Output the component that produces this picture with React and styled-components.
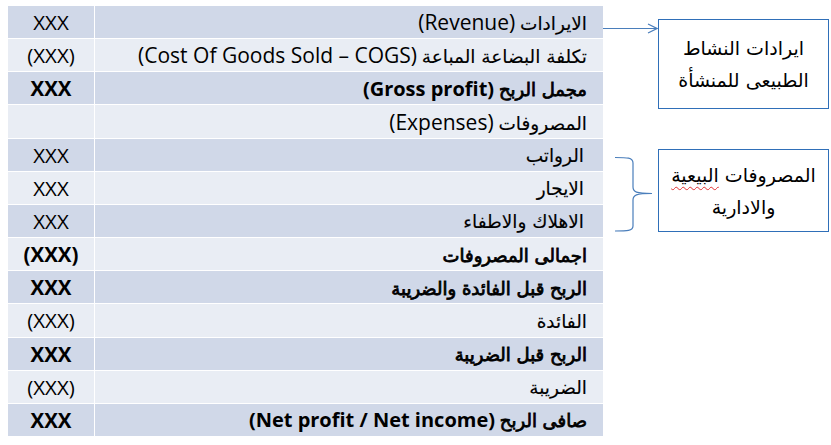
import React from "react";
import styled, { createGlobalStyle } from "styled-components";

const GlobalStyle = createGlobalStyle`
	html, body {
		margin: 0;
		padding: 0;
		background: #ffffff;
	}
`;

const rows = [
	{ value: "XXX", ar: "الايرادات", en: "(Revenue)" },
	{ value: "(XXX)", ar: "تكلفة البضاعة المباعة", en: "(Cost Of Goods Sold – COGS)" },
	{ value: "XXX", ar: "مجمل الربح", en: "(Gross profit)", bold: true },
	{ value: "", ar: "المصروفات", en: "(Expenses)" },
	{ value: "XXX", ar: "الرواتب", indent: true },
	{ value: "XXX", ar: "الايجار", indent: true },
	{ value: "XXX", ar: "الاهلاك والاطفاء", indent: true },
	{ value: "(XXX)", ar: "اجمالى المصروفات", bold: true },
	{ value: "XXX", ar: "الربح قبل الفائدة والضريبة", bold: true },
	{ value: "(XXX)", ar: "الفائدة" },
	{ value: "XXX", ar: "الربح قبل الضريبة", bold: true },
	{ value: "(XXX)", ar: "الضريبة" },
	{ value: "XXX", ar: "صافى الربح", en: "(Net profit / Net income)", bold: true },
];

export default function App() {
	return (
		<Page>
			<GlobalStyle />
			<Table>
				{rows.map((row, i) => (
					<React.Fragment key={i}>
						<ValueCell $dark={i % 2 === 0} $bold={row.bold}>
							{row.value}
						</ValueCell>
						<LabelCell $dark={i % 2 === 0} $indent={row.indent} dir="rtl">
							<span>
								<Arabic $bold={row.bold}>{row.ar}</Arabic>
								{row.en && (
									<>
										{" "}
										<Latin $bold={row.bold}>{row.en}</Latin>
									</>
								)}
							</span>
						</LabelCell>
					</React.Fragment>
				))}
			</Table>
			<Side>
				<Note $top={13}>
					<Connector width="55" height="90" viewBox="0 0 55 90">
						<path d="M0 9.5 H54" stroke="#4a7ebb" strokeWidth="1.2" fill="none" />
						<path d="M45 5 L54 9.5 L45 14" stroke="#4a7ebb" strokeWidth="1.2" fill="none" />
					</Connector>
					<NoteBox $height={90} dir="rtl">
						<span>ايرادات النشاط</span>
						<span>الطبيعى للمنشأة</span>
					</NoteBox>
				</Note>
				<Note $top={40}>
					<Connector width="55" height="83" viewBox="0 0 55 83">
						<path
							d="M12 8.5 C24 8.5 30 8.5 30 14 V38 C30 43 33 44.5 49 44.5 C33 44.5 30 46 30 51 V77 C30 82 24 82 12 82"
							stroke="#4a7ebb"
							strokeWidth="1.2"
							fill="none"
						/>
					</Connector>
					<NoteBox $height={83} dir="rtl">
						<span>
							المصروفات <Squiggle>البيعية</Squiggle>
						</span>
						<span>والادارية</span>
					</NoteBox>
				</Note>
			</Side>
		</Page>
	);
}

const Page = styled.div`
	display: flex;
	align-items: flex-start;
	padding: 6px 0 0 8px;
	width: 831px;
	height: 445px;
	box-sizing: border-box;
`;

const Table = styled.div`
	display: grid;
	grid-template-columns: 86px 508px;
	grid-template-rows: repeat(13, 1fr);
	gap: 1px;
	width: 595px;
	height: 430px;
	background: #ffffff;
	font-family: "Open Sans", "DejaVu Sans", sans-serif;
	font-size: 18.5px;
	color: #000000;
`;

const Cell = styled.div`
	display: flex;
	align-items: center;
	background: ${(p) => (p.$dark ? "#d0d8e8" : "#e9edf4")};
	white-space: nowrap;
`;

const ValueCell = styled(Cell)`
	justify-content: center;
	font-size: 20.5px;
	font-weight: ${(p) => (p.$bold ? 700 : 400)};
`;

const LabelCell = styled(Cell)`
	justify-content: flex-start;
	padding-right: ${(p) => (p.$indent ? "19px" : "16px")};
`;

const Arabic = styled.span`
	font-family: "DejaVu Sans", sans-serif;
	font-size: ${(p) => (p.$bold ? "18px" : "18.5px")};
	-webkit-text-stroke: ${(p) => (p.$bold ? "0.8px #000" : "0.15px #000")};
`;

const Latin = styled.span`
	font-size: ${(p) => (p.$bold ? "20px" : "21px")};
	font-weight: ${(p) => (p.$bold ? 700 : 400)};
`;

const Side = styled.div`
	display: flex;
	flex-direction: column;
`;

const Note = styled.div`
	display: flex;
	align-items: flex-start;
	margin-top: ${(p) => p.$top}px;
`;

const Connector = styled.svg`
	display: block;
	flex: none;
`;

const NoteBox = styled.div`
	box-sizing: border-box;
	width: 171px;
	height: ${(p) => p.$height}px;
	border: 1.5px solid #2f6fb8;
	display: flex;
	flex-direction: column;
	align-items: center;
	justify-content: center;
	font-family: "DejaVu Sans", sans-serif;
	font-size: 19px;
	line-height: 32px;
	color: #000000;
`;

const Squiggle = styled.span`
	text-decoration: underline wavy #e03030;
	text-decoration-thickness: 1px;
	text-underline-offset: 4px;
`;
